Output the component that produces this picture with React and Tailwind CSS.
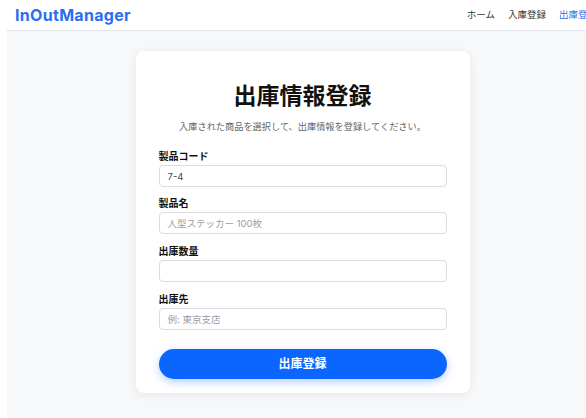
import React from 'react';

const font = { fontFamily: 'Inter, "Noto Sans CJK JP", "Noto Sans", sans-serif' };

const Field = ({ label, value, placeholder, className = '' }) => (
  <div className={className}>
    <label className="block text-[10px] font-bold leading-[14px] text-[#111]">{label}</label>
    <input
      className="mt-[2px] block h-[22px] w-full rounded-[4px] border border-[#d9dce1] bg-white px-[8px] text-[9.5px] text-[#444] placeholder-[#9a9ea5] outline-none"
      defaultValue={value}
      placeholder={placeholder}
    />
  </div>
);

export default function App() {
  return (
    <div className="h-[418px] w-[586px] overflow-hidden bg-white pl-[7px]" style={font}>
      <div className="flex h-full w-[591px] flex-col">
        <header className="flex h-[31px] shrink-0 items-center justify-between border-b border-[#e3e5e8] bg-white pl-[8px] pr-[1px]">
          <span className="text-[16px] font-bold tracking-[0.3px] text-[#2b6ff0]">InOutManager</span>
          <nav className="flex items-center gap-[13px] text-[9.5px] text-[#333]">
            <a>ホーム</a>
            <a>入庫登録</a>
            <a className="text-[#2b6ff0]">出庫登録</a>
          </nav>
        </header>
        <main className="flex flex-1 justify-center bg-[#f7f8fa] pt-[20px]">
          <div className="h-[342px] w-[334px] rounded-[8px] bg-white px-[23px] pt-[31px] shadow-[0_2px_10px_rgba(0,0,0,0.08)]">
            <h1 className="text-center text-[23px] font-bold leading-[28px] text-[#111]">出庫情報登録</h1>
            <p className="mt-[10px] text-center text-[9.2px] leading-[14px] text-[#666]">
              入庫された商品を選択して、出庫情報を登録してください。
            </p>
            <Field className="mt-[15px]" label="製品コード" value="7-4" />
            <Field className="mt-[9px]" label="製品名" placeholder="人型ステッカー 100枚" />
            <Field className="mt-[10px]" label="出庫数量" />
            <Field className="mt-[10px]" label="出庫先" placeholder="例: 東京支店" />
            <button className="mt-[19px] flex h-[30px] w-full items-center justify-center rounded-full bg-[#0a66ff] text-[12px] font-bold text-white shadow-[0_3px_8px_rgba(10,102,255,0.3)]">
              出庫登録
            </button>
          </div>
        </main>
      </div>
    </div>
  );
}
